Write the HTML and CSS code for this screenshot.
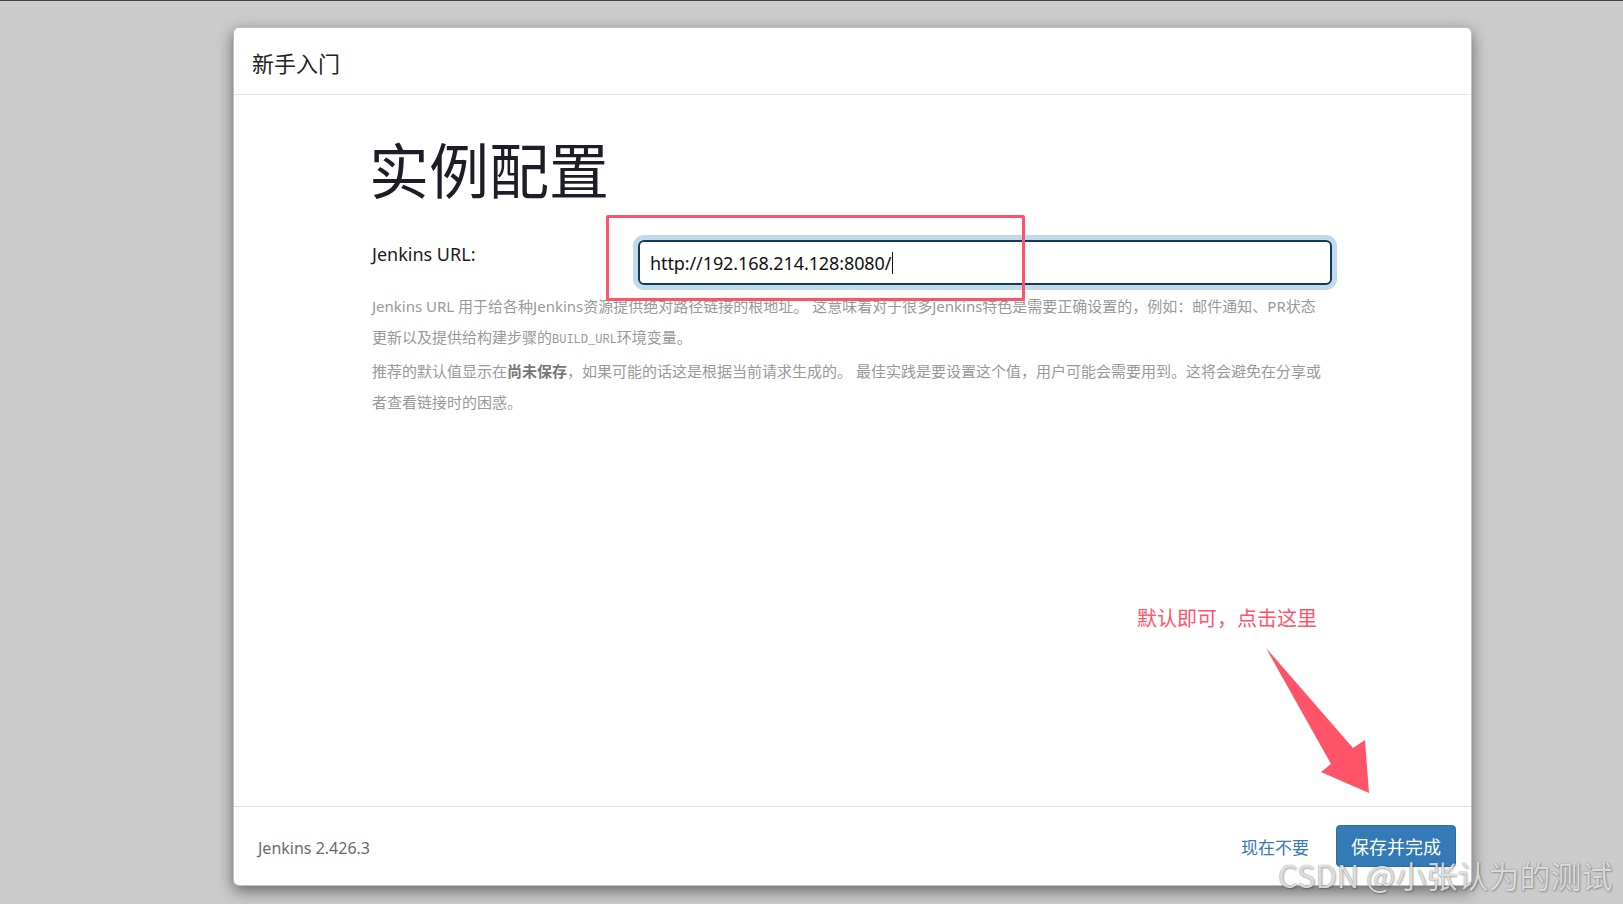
FILE: index.html
```html
<!DOCTYPE html>
<html lang="zh-CN">
<head>
<meta charset="utf-8">
<title>实例配置 - Jenkins</title>
<link rel="stylesheet" href="styles.css">
</head>
<body>
<div class="page">
  <div class="dialog">
    <div class="dialog-header">
      <h4 class="dialog-title">新手入门</h4>
    </div>
    <div class="dialog-body">
      <div class="content">
        <h1 class="heading">实例配置</h1>
        <div class="form-row">
          <label class="form-label">Jenkins URL:</label>
          <div class="form-control"><span class="value">http://192.168.214.128:8080/</span><span class="caret"></span></div>
          <div class="mark-box"></div>
        </div>
        <div class="help">
          <p>Jenkins URL 用于给各种Jenkins资源提供绝对路径链接的根地址。 这意味着对于很多Jenkins特色是需要正确设置的，例如：邮件通知、PR状态更新以及提供给构建步骤的<code>BUILD_URL</code>环境变量。</p>
          <p>推荐的默认值显示在<strong>尚未保存</strong>，如果可能的话这是根据当前请求生成的。 最佳实践是要设置这个值，用户可能会需要用到。这将会避免在分享或者查看链接时的困惑。</p>
        </div>
      </div>
      <div class="note">默认即可，点击这里</div>
      <svg class="arrow" width="115" height="160" viewBox="0 0 115 160" aria-hidden="true">
        <polygon points="6,7 93,107 105,99 109,152 61,131 71,123" fill="#ff5468"/>
      </svg>
    </div>
    <div class="dialog-footer">
      <span class="version">Jenkins 2.426.3</span>
      <div class="actions">
        <a class="skip" href="#">现在不要</a>
        <button class="btn-primary" type="button">保存并完成</button>
      </div>
    </div>
  </div>
  <div class="watermark">CSDN @小张认为的测试</div>
</div>
</body>
</html>
```
FILE: styles.css
```css
* { box-sizing: border-box; }
html, body {
  margin: 0;
  padding: 0;
  background: #cccccc;
}
body {
  font-family: "Noto Sans", "Noto Sans CJK SC", sans-serif;
  color: #333;
  border-top: 1px solid #444;
  height: 904px;
  overflow: hidden;
}
.page {
  position: relative;
  height: 903px;
  padding-top: 26px;
}
.dialog {
  position: relative;
  margin-left: 233px;
  width: 1239px;
  height: 859px;
  background: #fff;
  border: 1px solid rgba(0,0,0,0.25);
  border-radius: 6px;
  box-shadow: 0 5px 16px rgba(0,0,0,0.5);
  display: flex;
  flex-direction: column;
}
.dialog-header {
  height: 67px;
  border-bottom: 1px solid #e5e5e5;
  padding-left: 18px;
  display: flex;
  align-items: center;
}
.dialog-title {
  margin: 0;
  font-family: "Noto Sans CJK SC", sans-serif;
  font-size: 22px;
  font-weight: 400;
  color: #222;
  padding-top: 1px;
}
.dialog-body {
  position: relative;
  flex: 1;
}
.content {
  width: 960px;
  margin-left: 138px;
}
.heading {
  margin: 36px 0 0 -3px;
  font-family: "Noto Sans CJK SC", sans-serif;
  font-size: 60px;
  line-height: 73px;
  font-weight: 400;
  color: #1d1d28;
}
.form-row {
  position: relative;
  margin-top: 36px;
  display: grid;
  grid-template-columns: 266px 694px;
  align-items: start;
}
.form-label {
  font-size: 18px;
  line-height: 27px;
  padding-top: 1px;
  color: #1a1a1a;
}
.form-control {
  height: 45px;
  border: 2px solid #0e3a5e;
  border-radius: 6px;
  box-shadow: 0 0 0 5px #c3d9ea;
  padding-left: 10px;
  display: flex;
  align-items: center;
  font-size: 18px;
  color: #111;
  letter-spacing: -0.1px;
}
.caret {
  display: inline-block;
  width: 1px;
  height: 22px;
  background: #111;
  margin-left: 1px;
}
.mark-box {
  position: absolute;
  left: 234px;
  top: -25px;
  width: 419px;
  height: 86px;
  border: 3px solid #ff5468;
  border-radius: 2px;
}
.help {
  margin-top: 6px;
  max-width: 950px;
  font-size: 15px;
  line-height: 31px;
  color: #999;
}
.help p { margin: 0; }
.help p + p { margin-top: 3px; }
.help code {
  font-family: "Liberation Mono", "DejaVu Sans Mono", monospace;
  font-size: 12px;
  line-height: 1;
  color: #999;
}
.help strong {
  font-weight: 700;
  color: #777;
}
.note {
  position: absolute;
  left: 903px;
  top: 510px;
  font-family: "Noto Sans CJK SC", sans-serif;
  font-size: 20px;
  line-height: 26px;
  color: #ff5468;
}
.arrow {
  position: absolute;
  left: 1026px;
  top: 546px;
}
.dialog-footer {
  height: 79px;
  border-top: 1px solid #e0e0e0;
  padding: 0 15px 0 24px;
  display: flex;
  align-items: center;
  justify-content: space-between;
}
.version {
  font-size: 16px;
  color: #6b6b6b;
  padding-top: 3px;
}
.actions {
  display: flex;
  align-items: center;
  gap: 27px;
}
.skip {
  font-family: "Noto Sans CJK SC", sans-serif;
  font-size: 17px;
  color: #337ab7;
  text-decoration: none;
}
.btn-primary {
  height: 42px;
  width: 120px;
  border: 1px solid #2e6da4;
  border-radius: 4px;
  background: #337ab7;
  color: #fff;
  font-family: "Noto Sans CJK SC", sans-serif;
  font-size: 18px;
  padding: 0;
}
.watermark {
  position: absolute;
  left: 1278px;
  top: 856px;
  font-family: "Noto Sans CJK SC", sans-serif;
  font-size: 31px;
  line-height: 36px;
  white-space: nowrap;
  color: rgba(255,255,255,0.8);
  text-shadow: 0 0 1px rgba(0,0,0,0.55), 1px 1px 2px rgba(0,0,0,0.25);
}
```
